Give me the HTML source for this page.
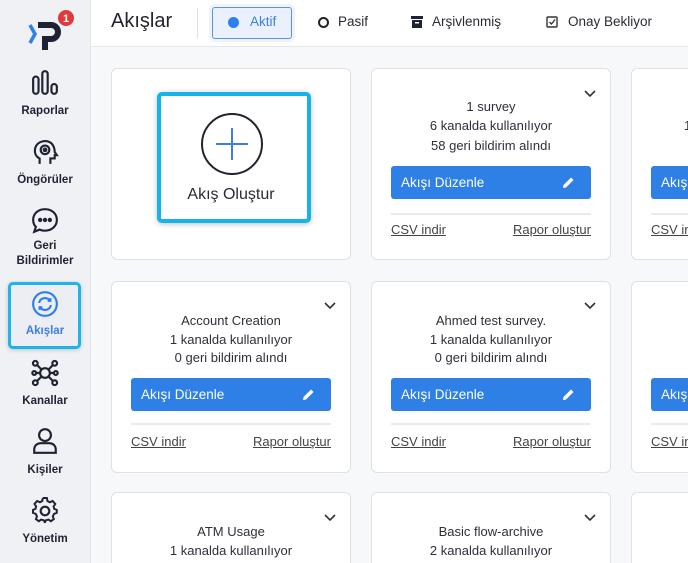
<!DOCTYPE html>
<html style="width:688px;height:563px;overflow:hidden"><head><meta charset="utf-8"><style>
*{box-sizing:border-box;margin:0;padding:0}
html,body{width:688px;height:563px;overflow:hidden}
body{background:#f7f8fa;font-family:"Liberation Sans",sans-serif;color:#2a2a35;position:relative}
.side{position:absolute;left:0;top:0;width:91px;height:563px;background:#f0f1f5;border-right:1px solid #e1e3ea}
.it{position:absolute;left:0;width:90px;text-align:center;font-size:11.5px;font-weight:bold;color:#1f2233;line-height:15px}
.it svg{display:block;margin:0 auto}
.hdr{position:absolute;left:91px;top:0;right:0;height:47px;background:#fff;border-bottom:1px solid #e4e6ec}
.t{position:absolute;font-size:13.5px;color:#2a2a35}
.card{position:absolute;width:240px;height:192px;background:#fff;border:1px solid #dfe1e6;border-radius:6px}
.card .l{position:absolute;left:0;right:0;text-align:center;font-size:13px;color:#2f2f3a}
.btn{position:absolute;left:19px;width:200px;height:33px;background:#2e80e6;border-radius:3px;color:#fff;font-size:13.5px;line-height:33px;padding-left:10px}
.btn svg{position:absolute;right:16px;top:10px}
.div{position:absolute;left:19px;width:200px;height:2px;background:#e8eaee}
.lk{position:absolute;font-size:13px;color:#444;text-decoration:underline}
.chev{position:absolute;right:14px}
</style></head><body>
<div class="side">
  <svg style="position:absolute;left:26px;top:8px" width="50" height="44" viewBox="0 0 50 44">
    <path d="M4 17 L9 26 L4 35" stroke="#2d7ff0" stroke-width="3.5" fill="none"/>
    <path d="M12 17 H25 A7 7 0 0 1 25 31 H19 V42" stroke="#1f2233" stroke-width="6" fill="none"/>
    <circle cx="40" cy="10" r="8" fill="#e03a3a"/><text x="40" y="14" font-size="11" font-weight="bold" fill="#fff" text-anchor="middle" font-family="Liberation Sans">1</text>
  </svg>
  <div class="it" style="top:69px"><svg width="28" height="28" viewBox="0 0 26 26" fill="none" stroke="#1f2233" stroke-width="2"><rect x="2" y="7" width="5" height="16" rx="2.5"/><rect x="10.5" y="2" width="5" height="21" rx="2.5"/><rect x="19" y="14" width="5" height="9" rx="2.5"/></svg><div style="margin-top:7px">Raporlar</div></div>
  <div class="it" style="top:138px"><svg width="28" height="28" viewBox="0 0 26 26" fill="none" stroke="#1f2233" stroke-width="2"><path d="M8 24 V19 C4 17 3 13 4 9 C6 3 14 1 19 5 C22 8 22 11 22 13 L24 16 H22 V19 H18 V24"/><circle cx="13" cy="11" r="4"/><circle cx="13" cy="11" r="1.2"/></svg><div style="margin-top:7px">Öngörüler</div></div>
  <div class="it" style="top:207px"><svg width="28" height="28" viewBox="0 0 26 26" fill="none" stroke="#1f2233" stroke-width="2"><path d="M13 2 C19 2 24 6 24 12 C24 18 19 22 13 22 C11 22 9 21.5 8 21 L3 23 L4.5 18.5 C3 17 2 14.5 2 12 C2 6 7 2 13 2 Z"/><circle cx="8.5" cy="12" r="1" fill="#1f2233"/><circle cx="13" cy="12" r="1" fill="#1f2233"/><circle cx="17.5" cy="12" r="1" fill="#1f2233"/></svg><div style="margin-top:4px">Geri<br>Bildirimler</div></div>
  <div style="position:absolute;left:8px;top:282px;width:73px;height:67px;border:3px solid #1cb4ea;border-radius:5px;background:#eceef3;box-shadow:0 1px 4px rgba(0,0,0,.2)"></div>
  <div class="it" style="top:290px;color:#3a7fe5"><svg width="28" height="28" viewBox="0 0 26 26" fill="none" stroke="#2d7ff0" stroke-width="2"><circle cx="13" cy="13" r="11"/><path d="M7.5 12 A5.5 5.5 0 0 1 17.5 10 M15.5 10 H18 V7.5 M18.5 14 A5.5 5.5 0 0 1 8.5 16 M10.5 16 H8 V18.5"/></svg><div style="margin-top:6px">Akışlar</div></div>
  <div class="it" style="top:359px"><svg width="28" height="28" viewBox="0 0 26 26" fill="none" stroke="#1f2233" stroke-width="2"><circle cx="13" cy="13" r="4.5"/><circle cx="4" cy="4" r="2.2"/><circle cx="22" cy="4" r="2.2"/><circle cx="4" cy="22" r="2.2"/><circle cx="22" cy="22" r="2.2"/><circle cx="3" cy="13" r="1.8"/><circle cx="23" cy="13" r="1.8"/><path d="M5.5 5.5 L10 10 M20.5 5.5 L16 10 M5.5 20.5 L10 16 M20.5 20.5 L16 16 M5 13 H8.5 M21 13 H17.5"/></svg><div style="margin-top:7px">Kanallar</div></div>
  <div class="it" style="top:427px"><svg width="28" height="28" viewBox="0 0 26 26" fill="none" stroke="#1f2233" stroke-width="2"><circle cx="13" cy="7.5" r="5.5"/><path d="M3 24 V21 C3 17 6 15 9 15 H17 C20 15 23 17 23 21 V24 Z"/></svg><div style="margin-top:8px">Kişiler</div></div>
  <div class="it" style="top:497px"><svg width="28" height="28" viewBox="0 0 26 26" fill="none" stroke="#1f2233" stroke-width="2"><path d="M11 2 H15 L15.6 5 L18 6.3 L20.8 5 L23.5 8 L21.8 10.5 L22.5 13 L25 14 V17 L22.3 18 L21 20.5 L22 23.3 L19 25.5 L16.8 23.8 L14 24.5 L13 27 M11 2 L10.4 5 L8 6.3 L5.2 5 L2.5 8 L4.2 10.5 L3.5 13 L1 14 V17 L3.7 18 L5 20.5 L4 23.3 L7 25.5 L9.2 23.8 L12 24.5 L13 27" transform="scale(0.92) translate(1,-1)"/><circle cx="13" cy="13" r="4"/></svg><div style="margin-top:7px">Yönetim</div></div>
</div>
<div class="hdr">
  <div style="position:absolute;left:20px;top:10px;font-size:20px;color:#23232e">Akışlar</div>
  <div style="position:absolute;left:106px;top:8px;width:1px;height:30px;background:#dcdfe5"></div>
  <div style="position:absolute;left:121px;top:7px;width:80px;height:32px;background:#eaf1fd;border:1px solid #5b92e3;border-radius:3px;box-shadow:0 0 0 3px #eef3fc"></div>
  <div style="position:absolute;left:137px;top:17px;width:11px;height:11px;border-radius:50%;background:#2d7ff0"></div>
  <div class="t" style="left:159px;top:14px;color:#3a7fe5">Aktif</div>
  <div style="position:absolute;left:227px;top:17px;width:11px;height:11px;border-radius:50%;border:2px solid #222"></div>
  <div class="t" style="left:247px;top:14px">Pasif</div>
  <svg style="position:absolute;left:320px;top:16px" width="12" height="12" viewBox="0 0 12 12"><rect x="0" y="0" width="12" height="3" fill="#1f2233"/><rect x="1" y="4" width="10" height="8" fill="#1f2233"/><rect x="4" y="6" width="4" height="1.5" fill="#fff"/></svg>
  <div class="t" style="left:341px;top:14px">Arşivlenmiş</div>
  <svg style="position:absolute;left:455px;top:16px" width="12" height="12" viewBox="0 0 12 12" fill="none" stroke="#333" stroke-width="1.4"><rect x="1" y="1" width="10" height="10" rx="1"/><path d="M3.5 6 L5.5 8 L9 3.5"/></svg>
  <div class="t" style="left:477px;top:14px">Onay Bekliyor</div>
</div>

<div class="card" style="left:111px;top:68px">
  <div style="position:absolute;left:45px;top:23px;width:154px;height:131px;border:4px solid #16b2ea;border-radius:5px;box-shadow:0 1px 6px rgba(0,0,0,.25)"></div>
  <svg style="position:absolute;left:88px;top:43px" width="64" height="64" viewBox="0 0 64 64"><circle cx="32" cy="32" r="30" fill="none" stroke="#23232e" stroke-width="2"/><path d="M32 16 V48 M16 32 H48" stroke="#3a7fe5" stroke-width="2"/></svg>
  <div style="position:absolute;left:0;right:0;top:117px;text-align:center;font-size:16px;color:#2a2a35">Akış Oluştur</div>
</div>

<div class="card" style="left:371px;top:68px">
  <svg class="chev" style="top:21px" width="12" height="8" viewBox="0 0 12 8"><path d="M1 1 L6 6 L11 1" stroke="#333" stroke-width="1.6" fill="none"/></svg>
  <div class="l" style="top:30px">1 survey</div><div class="l" style="top:49px">6 kanalda kullanılıyor</div><div class="l" style="top:69px">58 geri bildirim alındı</div>
  <div class="btn" style="top:97px">Akışı Düzenle<svg width="13" height="13" viewBox="0 0 13 13"><path d="M1 12 L1.5 9 L9 1.5 L11.5 4 L4 11.5 Z" fill="#fff"/></svg></div>
  <div class="div" style="top:144px"></div>
  <div class="lk" style="left:19px;top:153px">CSV indir</div><div class="lk" style="right:19px;top:153px">Rapor oluştur</div>
</div>

<div class="card" style="left:631px;top:68px">
  <div class="l" style="top:49px;left:52px;text-align:left">1</div>
  <div class="btn" style="top:97px">Akışı</div>
  <div class="div" style="top:144px"></div>
  <div class="lk" style="left:19px;top:153px">CSV indir</div>
</div>

<div class="card" style="left:111px;top:281px">
  <svg class="chev" style="top:20px" width="12" height="8" viewBox="0 0 12 8"><path d="M1 1 L6 6 L11 1" stroke="#333" stroke-width="1.6" fill="none"/></svg>
  <div class="l" style="top:31px">Account Creation</div><div class="l" style="top:50px">1 kanalda kullanılıyor</div><div class="l" style="top:68px">0 geri bildirim alındı</div>
  <div class="btn" style="top:96px">Akışı Düzenle<svg width="13" height="13" viewBox="0 0 13 13"><path d="M1 12 L1.5 9 L9 1.5 L11.5 4 L4 11.5 Z" fill="#fff"/></svg></div>
  <div class="div" style="top:141px"></div>
  <div class="lk" style="left:19px;top:152px">CSV indir</div><div class="lk" style="right:19px;top:152px">Rapor oluştur</div>
</div>

<div class="card" style="left:371px;top:281px">
  <svg class="chev" style="top:20px" width="12" height="8" viewBox="0 0 12 8"><path d="M1 1 L6 6 L11 1" stroke="#333" stroke-width="1.6" fill="none"/></svg>
  <div class="l" style="top:31px">Ahmed test survey.</div><div class="l" style="top:50px">1 kanalda kullanılıyor</div><div class="l" style="top:68px">0 geri bildirim alındı</div>
  <div class="btn" style="top:96px">Akışı Düzenle<svg width="13" height="13" viewBox="0 0 13 13"><path d="M1 12 L1.5 9 L9 1.5 L11.5 4 L4 11.5 Z" fill="#fff"/></svg></div>
  <div class="div" style="top:141px"></div>
  <div class="lk" style="left:19px;top:152px">CSV indir</div><div class="lk" style="right:19px;top:152px">Rapor oluştur</div>
</div>

<div class="card" style="left:631px;top:281px">
  <div class="btn" style="top:96px">Akışı</div>
  <div class="div" style="top:141px"></div>
  <div class="lk" style="left:19px;top:152px">CSV indir</div>
</div>

<div class="card" style="left:111px;top:492px;height:71px;border-bottom:none;border-radius:6px 6px 0 0">
  <svg class="chev" style="top:21px" width="12" height="8" viewBox="0 0 12 8"><path d="M1 1 L6 6 L11 1" stroke="#333" stroke-width="1.6" fill="none"/></svg>
  <div class="l" style="top:31px">ATM Usage</div><div class="l" style="top:50px">1 kanalda kullanılıyor</div>
</div>
<div class="card" style="left:371px;top:492px;height:71px;border-bottom:none;border-radius:6px 6px 0 0">
  <svg class="chev" style="top:21px" width="12" height="8" viewBox="0 0 12 8"><path d="M1 1 L6 6 L11 1" stroke="#333" stroke-width="1.6" fill="none"/></svg>
  <div class="l" style="top:31px">Basic flow-archive</div><div class="l" style="top:50px">2 kanalda kullanılıyor</div>
</div>
<div class="card" style="left:631px;top:492px;height:71px;border-bottom:none;border-radius:6px 6px 0 0"></div>
</body></html>
